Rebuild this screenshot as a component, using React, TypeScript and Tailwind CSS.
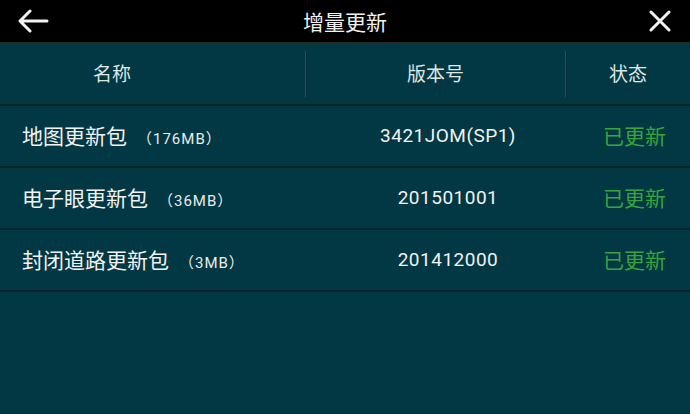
import React from "react";

const rows = [
  { name: "地图更新包", size: "（176MB）", ver: "3421JOM(SP1)" },
  { name: "电子眼更新包", size: "（36MB）", ver: "201501001" },
  { name: "封闭道路更新包", size: "（3MB）", ver: "201412000" },
];

export default function App() {
  return (
    <div
      className="w-[690px] h-[414px] bg-[#023843] flex flex-col overflow-hidden"
      style={{ fontFamily: '"Noto Sans CJK SC", "Noto Sans", sans-serif' }}
    >
      <div className="h-[43px] bg-black flex items-center justify-between border-b border-[#2b2a25] shrink-0">
        <div className="w-[66px] flex items-center pl-[17px]">
          <svg width="32" height="24" viewBox="0 0 32 24" fill="none">
            <path d="M30 12H3M13 2L3 12l10 10" stroke="#f2f2f2" strokeWidth="3" strokeLinecap="round" strokeLinejoin="round" />
          </svg>
        </div>
        <div className="text-[21px] text-[#f2f2f2] leading-none">增量更新</div>
        <div className="w-[66px] flex items-center justify-end pr-[19px]">
          <svg width="22" height="22" viewBox="0 0 22 22" fill="none">
            <path d="M2 2l18 18M20 2L2 20" stroke="#f2f2f2" strokeWidth="3" strokeLinecap="round" />
          </svg>
        </div>
      </div>
      <div className="h-[63px] flex items-center shrink-0 border-b-2 border-[#01222a]">
        <div className="w-[305px] pl-[93px] text-[19px] text-[#dfe6e6]">名称</div>
        <div className="w-px h-[46px] bg-[#1d5661] shadow-[1px_0_0_#012d36]" />
        <div className="w-[259px] text-center text-[19px] text-[#dfe6e6]">版本号</div>
        <div className="w-px h-[46px] bg-[#1d5661] shadow-[1px_0_0_#012d36]" />
        <div className="flex-1 text-center text-[19px] text-[#dfe6e6]">状态</div>
      </div>
      {rows.map((r) => (
        <div key={r.name} className="h-[62px] flex items-center shrink-0 border-b-2 border-[#01222a]">
          <div className="w-[305px] pl-[22px] flex items-baseline text-[#f2f2f2]">
            <span className="text-[21px]">{r.name}</span>
            <span className="text-[15px] ml-[10px] tracking-[1px] text-[#e8ecec]" style={{ fontFamily: 'Roboto, "Noto Sans CJK SC", sans-serif' }}>
              {r.size}
            </span>
          </div>
          <div
            className="w-[286px] text-center text-[19px] text-[#f2f2f2] tracking-[0.5px]"
            style={{ fontFamily: 'Roboto, sans-serif' }}
          >
            {r.ver}
          </div>
          <div className="flex-1 pr-[24px] text-right text-[21px] text-[#36a53c]">已更新</div>
        </div>
      ))}
      <div className="flex-1" />
    </div>
  );
}
